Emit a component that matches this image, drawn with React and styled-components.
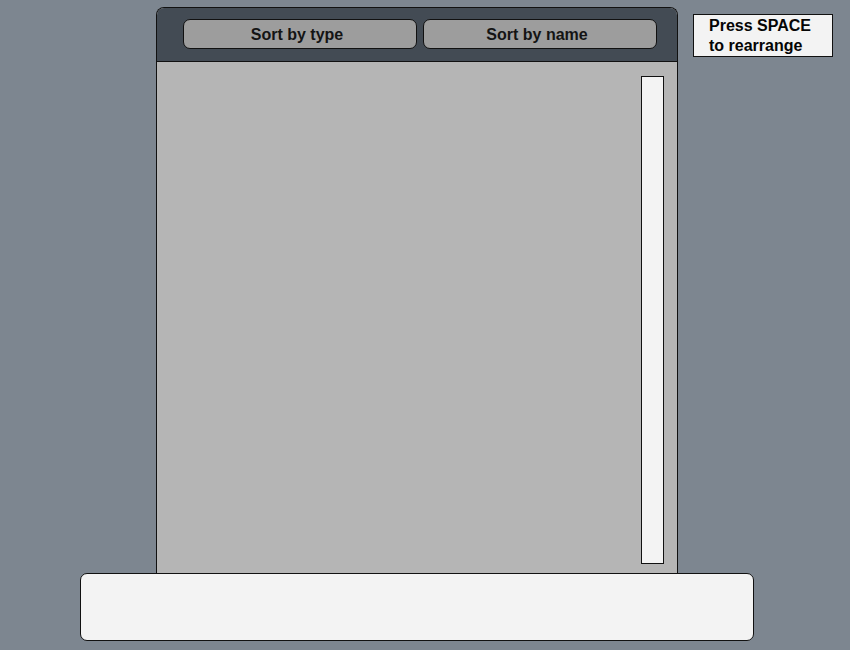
import React from "react";
import styled, { createGlobalStyle } from "styled-components";

const Global = createGlobalStyle`
  html, body {
    margin: 0;
    padding: 0;
    background: #7d8690;
    font-family: "Liberation Sans", Arial, sans-serif;
    overflow: hidden;
  }
`;

const Page = styled.div`
  width: 850px;
  height: 650px;
  display: flex;
  flex-direction: column;
`;

const TopRow = styled.div`
  display: flex;
  align-items: flex-start;
  padding: 7px 0 0 156px;
`;

const Panel = styled.div`
  width: 520px;
  height: 580px;
  border: 1px solid #111;
  border-bottom: none;
  border-radius: 8px 8px 0 0;
  background: #b5b5b5;
  display: flex;
  flex-direction: column;
  overflow: hidden;
`;

const Header = styled.div`
  height: 42px;
  padding: 11px 20px 0 26px;
  background: #434b54;
  border-bottom: 1px solid #111;
  display: flex;
  gap: 6px;
  align-items: flex-start;
`;

const SortButton = styled.button`
  width: ${(p) => p.w}px;
  height: 30px;
  border: 1px solid #111;
  border-radius: 7px;
  background: #9d9d9d;
  color: #141414;
  font-family: "Liberation Sans", Arial, sans-serif;
  font-weight: bold;
  font-size: 16px;
  padding: 2px 6px 0 0;
  cursor: pointer;
`;

const Body = styled.div`
  flex: 1;
  display: flex;
  justify-content: flex-end;
  padding: 14px 13px 0 0;
`;

const ScrollTrack = styled.div`
  width: 21px;
  height: 486px;
  border: 1px solid #111;
  background: #f3f3f3;
`;

const Notice = styled.div`
  margin: 7px 0 0 15px;
  width: 123px;
  height: 40px;
  padding: 1px 0 0 15px;
  border: 1px solid #111;
  background: #f3f3f3;
  color: #050505;
  font-weight: bold;
  font-size: 16px;
  line-height: 20px;
`;

const Footer = styled.div`
  position: relative;
  z-index: 1;
  margin: -15px 0 0 80px;
  width: 672px;
  height: 66px;
  border: 1px solid #111;
  border-radius: 7px;
  background: #f3f3f3;
`;

export default function App() {
  return (
    <Page>
      <Global />
      <TopRow>
        <Panel>
          <Header>
            <SortButton w={234}>Sort by type</SortButton>
            <SortButton w={234}>Sort by name</SortButton>
          </Header>
          <Body>
            <ScrollTrack />
          </Body>
        </Panel>
        <Notice>
          Press SPACE
          <br />
          to rearrange
        </Notice>
      </TopRow>
      <Footer />
    </Page>
  );
}
